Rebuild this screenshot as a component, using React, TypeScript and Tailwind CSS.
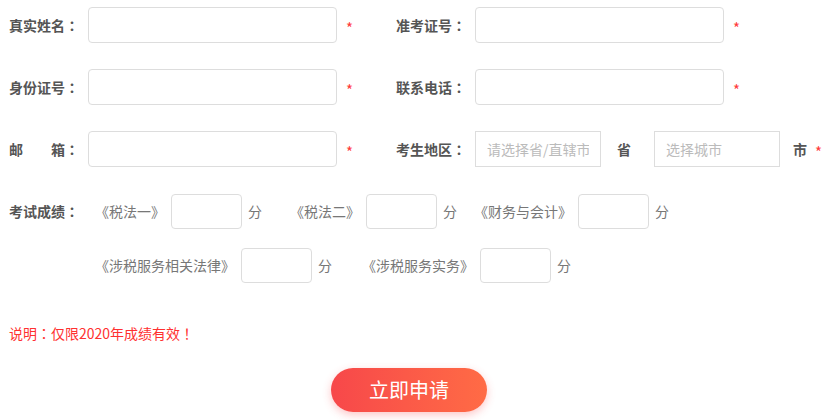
import React from 'react';

const font = { fontFamily: '"Noto Sans CJK SC", "Noto Sans", sans-serif' };

// centred full-width punctuation, as in the reference
const P: React.FC<{ c: string }> = ({ c }) => (
  <span className="font-['Noto_Sans_CJK_TC',sans-serif]">{c}</span>
);

const Star = () => <span className="text-[15px] text-[#ff3b3b] leading-none">*</span>;

const Field: React.FC<{ label: React.ReactNode }> = ({ label }) => (
  <div className="flex items-center h-[36px]">
    <span className="w-[79px] text-[14px] font-bold text-[#555]">{label}</span>
    <input className="w-[249px] h-[36px] border border-[#ddd] rounded-[4px] outline-none px-2" />
    <span className="ml-[9px] mt-[3px]">
      <Star />
    </span>
  </div>
);

const Score: React.FC<{ name: string; className?: string }> = ({ name, className }) => (
  <div className={'flex items-center ' + (className || '')}>
    <span className="text-[14px] text-[#777]">{name}</span>
    <input className="ml-[6px] w-[71px] h-[35px] border border-[#ddd] rounded-[4px] outline-none" />
    <span className="ml-[6px] text-[14px] text-[#777]">分</span>
  </div>
);

export default function App() {
  return (
    <div className="w-[830px] h-[420px] bg-white pl-[9px] pt-[7px]" style={font}>
      <div className="grid grid-cols-[387px_1fr] gap-y-[26px]">
        <Field label={<>真实姓名<P c="：" /></>} />
        <Field label={<>准考证号<P c="：" /></>} />
        <Field label={<>身份证号<P c="：" /></>} />
        <Field label={<>联系电话<P c="：" /></>} />
        <Field
          label={
            <span className="flex">
              <span>邮</span>
              <span className="ml-[28px]">
                箱<P c="：" />
              </span>
            </span>
          }
        />
        <div className="flex items-center h-[36px]">
          <span className="w-[79px] text-[14px] font-bold text-[#555]">
            考生地区<P c="：" />
          </span>
          <input
            placeholder="请选择省/直辖市"
            className="w-[126px] h-[36px] border border-[#ddd] outline-none px-[11px] text-[14px] placeholder:text-[#bbb]"
          />
          <span className="ml-[16px] text-[14px] font-bold text-[#555]">省</span>
          <input
            placeholder="选择城市"
            className="ml-[23px] w-[126px] h-[36px] border border-[#ddd] outline-none px-[11px] text-[14px] placeholder:text-[#bbb]"
          />
          <span className="ml-[13px] text-[14px] font-bold text-[#555]">市</span>
          <span className="ml-[8px] mt-[3px]">
            <Star />
          </span>
        </div>
      </div>

      <div className="mt-[27px] flex items-center h-[35px]">
        <span className="w-[86px] text-[14px] font-bold text-[#555]">
          考试成绩<P c="：" />
        </span>
        <Score name="《税法一》" />
        <Score name="《税法二》" className="ml-[28px]" />
        <Score name="《财务与会计》" className="ml-[17px]" />
      </div>
      <div className="mt-[19px] flex items-center h-[35px] pl-[86px]">
        <Score name="《涉税服务相关法律》" />
        <Score name="《涉税服务实务》" className="ml-[30px]" />
      </div>

      <p className="mt-[40px] text-[14px] text-[#ff3030] leading-[20px]">
        说明<P c="：" />仅限2020年成绩有效<P c="！" />
      </p>

      <div className="mt-[25px] pl-[322px]">
        <button className="w-[156px] h-[44px] rounded-full bg-gradient-to-r from-[#f7474a] to-[#ff6b45] text-white text-[20px] shadow-[0_3px_8px_rgba(247,71,74,0.3)]">
          立即申请
        </button>
      </div>
    </div>
  );
}
